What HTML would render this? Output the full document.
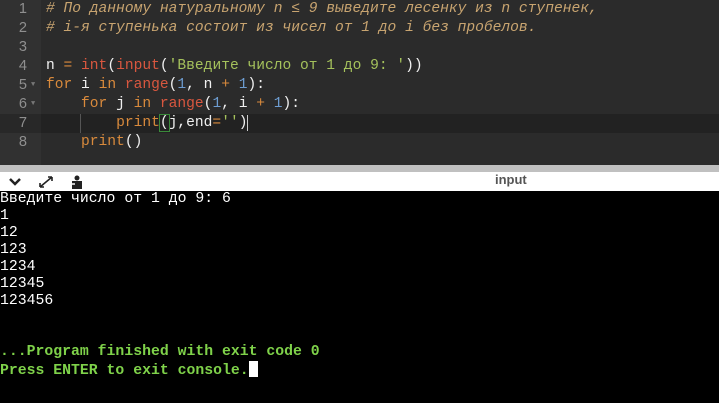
<!DOCTYPE html>
<html><head><meta charset="utf-8"><style>
body{margin:0;width:719px;height:403px;overflow:hidden;background:#000;font-family:"Liberation Mono","Noto Sans CJK SC",monospace;}
#ed{position:absolute;left:0;top:0;width:719px;height:165px;background:#2b2b2b;}
#gut{position:absolute;left:0;top:0;width:41px;height:165px;background:#313131;}
.ln{position:absolute;left:0;width:27px;text-align:right;color:#8f8f8f;font-size:14.6px;line-height:19px;font-family:"Liberation Sans",sans-serif;}
.cl{position:absolute;left:46px;font-size:14.6px;line-height:19px;color:#f0f0f0;white-space:pre;}
.c{color:#c8a470;font-style:italic}
.k{color:#d98a3c}.f{color:#d9573f}.s{color:#a5c25c}.n{color:#6d9cd0}
.arr{position:absolute;left:31px;color:#777;font-size:7px;}
#strip{position:absolute;left:0;top:165px;width:719px;height:7px;background:#c0c0c0;}
#tb{position:absolute;left:0;top:172px;width:719px;height:19px;background:#fff;}
#con{position:absolute;left:0;top:191px;font-size:14.8px;line-height:17px;color:#fff;white-space:pre;}
.g{color:#7fd24a;font-weight:bold}
</style></head><body>
<div id="ed">
<div id="gut"></div>
<div style="position:absolute;left:0;top:114px;width:41px;height:19px;background:#282828"></div>
<div style="position:absolute;left:41px;top:114px;width:678px;height:19px;background:#222"></div>
<div class="ln" style="top:0">1</div><div class="ln" style="top:19px">2</div><div class="ln" style="top:38px">3</div><div class="ln" style="top:57px">4</div><div class="ln" style="top:76px">5</div><div class="ln" style="top:95px">6</div><div class="ln" style="top:114px">7</div><div class="ln" style="top:133px">8</div>
<div class="arr" style="top:81px">▼</div><div class="arr" style="top:100px">▼</div>
<div style="position:absolute;left:80px;top:114px;width:1px;height:19px;background:#555"></div>
<div class="cl" style="top:0"><span class="c"># По данному натуральному n ≤ 9 выведите лесенку из n ступенек,</span></div>
<div class="cl" style="top:19px"><span class="c"># i-я ступенька состоит из чисел от 1 до i без пробелов.</span></div>
<div class="cl" style="top:57px">n <span class="k">=</span> <span class="f">int</span>(<span class="f">input</span>(<span class="s">'Введите число от 1 до 9: '</span>))</div>
<div class="cl" style="top:76px"><span class="k">for</span> i <span class="k">in</span> <span class="f">range</span>(<span class="n">1</span>, n <span class="k">+</span> <span class="n">1</span>):</div>
<div class="cl" style="top:95px">    <span class="k">for</span> j <span class="k">in</span> <span class="f">range</span>(<span class="n">1</span>, i <span class="k">+</span> <span class="n">1</span>):</div>
<div class="cl" style="top:114px">        <span class="k">print</span><span style="outline:1px solid #3a8a3a">(</span>j,end<span class="k">=</span><span class="s">''</span>)<span style="border-left:1px solid #ccc"></span></div>
<div class="cl" style="top:133px">    <span class="k">print</span>()</div>
</div>
<div id="strip"></div>
<div id="tb">
<svg width="100" height="19" style="position:absolute;left:0;top:0">
<path d="M10 7 L15 12 L20 7" stroke="#222" stroke-width="2.5" fill="none"/>
<path d="M40 15 L52 5 M40 15 v-4 M40 15 h4 M52 5 v4 M52 5 h-4" stroke="#222" stroke-width="1.6" fill="none"/>
<rect x="72" y="9" width="10" height="8" fill="#222"/><circle cx="77" cy="6" r="2.5" fill="#222"/><path d="M70 12 h5" stroke="#fff" stroke-width="1.5"/>
</svg>
<div style="position:absolute;left:495px;top:0;font-family:'Liberation Sans',sans-serif;font-weight:bold;font-size:13px;line-height:15px;color:#555">input</div>
</div>
<div id="con">Введите число от 1 до 9: 6
1
12
123
1234
12345
123456


<span class="g">...Program finished with exit code 0</span>
<span class="g">Press ENTER to exit console.</span><span style="display:inline-block;width:9px;height:16px;background:#fff;vertical-align:-3px"></span></div>
</body></html>
